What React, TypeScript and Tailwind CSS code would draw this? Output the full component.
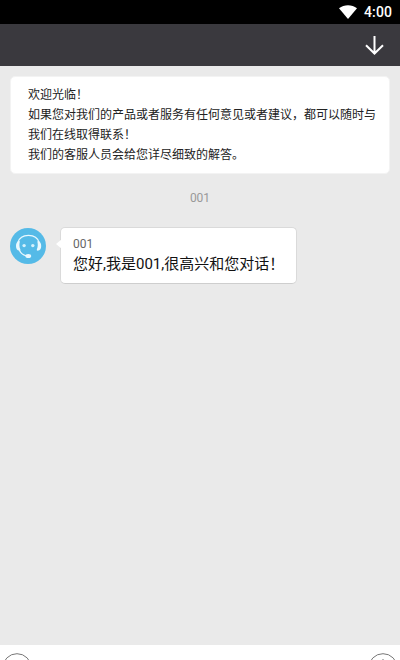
const welcomeLines = [
  '欢迎光临！',
  '如果您对我们的产品或者服务有任何意见或者建议，都可以随时与我们在线取得联系！',
  '我们的客服人员会给您详尽细致的解答。',
];

function StatusBar() {
  return (
    <div className="flex h-6 shrink-0 items-center justify-end bg-black pr-2">
      <svg className="mr-[7px] mb-px h-[14px] w-[18px]" viewBox="0 0 18 14" fill="white">
        <path d="M0 3.2C5.2-.9 12.8-.9 18 3.2L9 14Z" />
      </svg>
      <span className="text-[14px] leading-6 font-medium tracking-[0.1px] text-white">4:00</span>
    </div>
  );
}

function Header() {
  return (
    <div className="flex h-[42px] shrink-0 items-center justify-end bg-[#3a393e] pr-4">
      <svg className="h-[19px] w-[19px]" viewBox="0 0 19 19" fill="none" stroke="white" strokeWidth="2">
        <path d="M9.5 0V17.5M1 9.2L9.5 17.5L18 9.2" />
      </svg>
    </div>
  );
}

function AgentAvatar() {
  return (
    <svg className="mt-px h-9 w-9 shrink-0" viewBox="0 0 36 36" fill="none">
      <circle cx="18" cy="18" r="18" fill="#55bae7" />
      <path d="M8 14.5C9.2 10 13.2 7.4 18.5 7.4S27.8 10 29 14.5" stroke="#e9f8fe" strokeWidth="1.3" />
      <path d="M8.6 13C6.8 13.8 6 15.6 6 18S6.9 22.4 9.6 22.8C10.5 22.8 10.5 22 10.3 21.3C9.3 18.7 9.2 16.3 9.8 13.7C9.9 13 9.2 12.8 8.6 13Z" fill="#e9f8fe" />
      <path d="M28.6 13C30.4 13.8 31.2 15.6 31.2 18S30.3 22.4 27.6 22.8C26.7 22.8 26.7 22 26.9 21.3C27.9 18.7 28 16.3 27.4 13.7C27.3 13 28 12.8 28.6 13Z" fill="#e9f8fe" />
      <path d="M9.3 22C10.6 25 13 27.2 16.5 27.8" stroke="#e9f8fe" strokeWidth="1.3" />
      <ellipse cx="18.3" cy="28" rx="2.9" ry="2" fill="#e9f8fe" />
      <circle cx="14.1" cy="17.6" r="1.7" fill="#d5f1fc" />
      <circle cx="22.8" cy="17.6" r="1.7" fill="#d5f1fc" />
    </svg>
  );
}

function MessageBubble({ name, text }: { name: string; text: string }) {
  return (
    <div className="relative ml-[14px] h-[57px] w-[237px] rounded-[5px] border border-[#dadada] border-b-[#cecece] bg-white pt-[6px] pl-3">
      <svg className="absolute top-[11px] -left-[5px] h-[10px] w-[6px]" viewBox="0 0 6 10">
        <path d="M6 0L0 5L6 10Z" fill="white" />
      </svg>
      <p className="text-[12px] leading-5 text-[#666]">{name}</p>
      <p className="text-[15px] leading-5 whitespace-nowrap text-[#111]">{text}</p>
    </div>
  );
}

function InputBar() {
  return (
    <div className="flex h-[15px] shrink-0 justify-between overflow-hidden bg-white pt-2">
      <svg className="ml-[2px] h-[30px] w-[30px] shrink-0" viewBox="0 0 30 30" fill="none" stroke="#777">
        <circle cx="15" cy="15" r="14.3" />
      </svg>
      <svg className="mr-[2px] h-[30px] w-[30px] shrink-0" viewBox="0 0 30 30" fill="none" stroke="#777">
        <circle cx="15" cy="15" r="14.3" />
        <path d="M15 6V24M6 15H24" />
      </svg>
    </div>
  );
}

export default function App() {
  return (
    <div
      lang="zh-CN"
      className="flex h-[660px] w-[400px] flex-col overflow-hidden bg-[#eaeaea] font-[Roboto,'Noto_Sans_CJK_SC',sans-serif]"
    >
      <StatusBar />
      <Header />
      <main className="flex-1 px-[10px] pt-[10px]">
        <div className="h-[98px] rounded-[5px] border border-[#f3f3f3] bg-white pt-2 pr-3 pl-[17px] text-[12px] leading-5 text-[#222]">
          {welcomeLines.map((line) => (
            <p key={line}>{line}</p>
          ))}
        </div>
        <p className="mt-[14px] text-center text-[12px] leading-5 text-[#999]">001</p>
        <div className="mt-[19px] flex">
          <AgentAvatar />
          <MessageBubble name="001" text="您好,我是001,很高兴和您对话！" />
        </div>
      </main>
      <InputBar />
    </div>
  );
}
